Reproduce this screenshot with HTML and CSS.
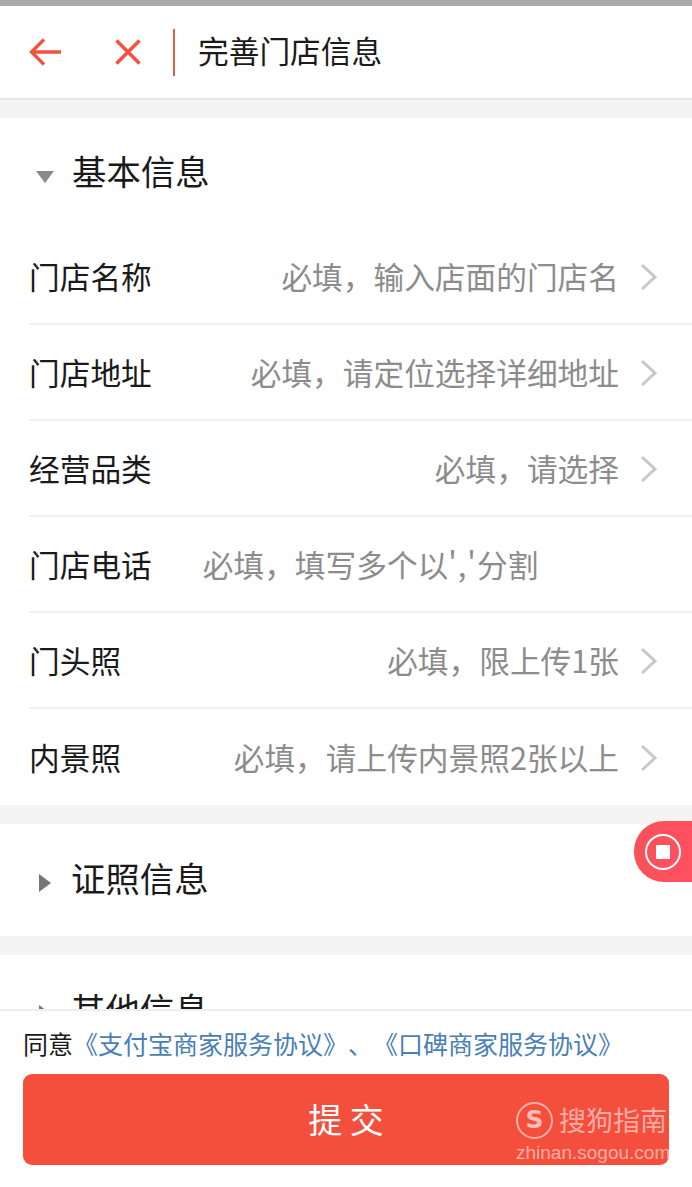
FILE: index.html
```html
<!DOCTYPE html>
<html lang="zh-CN">
<head>
    <meta charset="UTF-8">
    <title>完善门店信息</title>
    <link rel="stylesheet" href="styles.css">
</head>
<body>
    <div class="status"></div>
    <div class="header">
        <svg class="icon-back" width="34" height="32" viewBox="0 0 34 32">
            <path d="M32 16H3M15 3.500L2.500 16 15 28.500" fill="none" stroke="#f2533f" stroke-width="3.400"/>
        </svg>
        <svg class="icon-close" width="30" height="30" viewBox="0 0 30 30">
            <path d="M3.500 3.500L26.500 26.500M26.500 3.500L3.500 26.500" fill="none" stroke="#f2533f" stroke-width="3.600"/>
        </svg>
        <span class="header-line"></span>
        <span class="header-title">完善门店信息</span>
    </div>

    <div class="content">
        <div class="section section-first">
            <div class="section-title">
                <span class="arrow-down"></span>
                <span>基本信息</span>
            </div>
            <div class="row">
                <span class="row-label">门店名称</span>
                <span class="row-value">必填，输入店面的门店名</span>
                <svg class="chevron" width="20" height="30" viewBox="0 0 20 30"><path d="M3 3L16 15 3 27" fill="none" stroke="#c8c8c8" stroke-width="3"/></svg>
            </div>
            <div class="row">
                <span class="row-label">门店地址</span>
                <span class="row-value">必填，请定位选择详细地址</span>
                <svg class="chevron" width="20" height="30" viewBox="0 0 20 30"><path d="M3 3L16 15 3 27" fill="none" stroke="#c8c8c8" stroke-width="3"/></svg>
            </div>
            <div class="row">
                <span class="row-label">经营品类</span>
                <span class="row-value">必填，请选择</span>
                <svg class="chevron" width="20" height="30" viewBox="0 0 20 30"><path d="M3 3L16 15 3 27" fill="none" stroke="#c8c8c8" stroke-width="3"/></svg>
            </div>
            <div class="row">
                <span class="row-label">门店电话</span>
                <span class="row-input">必填，填写多个以<span class="row-quote">','</span>分割</span>
            </div>
            <div class="row">
                <span class="row-label">门头照</span>
                <span class="row-value">必填，限上传1张</span>
                <svg class="chevron" width="20" height="30" viewBox="0 0 20 30"><path d="M3 3L16 15 3 27" fill="none" stroke="#c8c8c8" stroke-width="3"/></svg>
            </div>
            <div class="row row-last">
                <span class="row-label">内景照</span>
                <span class="row-value">必填，请上传内景照2张以上</span>
                <svg class="chevron" width="20" height="30" viewBox="0 0 20 30"><path d="M3 3L16 15 3 27" fill="none" stroke="#c8c8c8" stroke-width="3"/></svg>
            </div>
        </div>

        <div class="section section-closed">
            <div class="section-title">
                <span class="arrow-right"></span>
                <span>证照信息</span>
            </div>
        </div>

        <div class="section section-closed">
            <div class="section-title">
                <span class="arrow-right"></span>
                <span>其他信息</span>
            </div>
        </div>
    </div>

    <div class="record">
        <span class="record-ring"><span class="record-stop"></span></span>
    </div>

    <div class="footer">
        <div class="agree">同意<a class="agree-link">《支付宝商家服务协议》、《口碑商家服务协议》</a></div>
        <div class="submit">提 交</div>
    </div>

    <div class="mark">
        <div class="mark-top">
            <span class="mark-logo">S</span>
            <span class="mark-name">搜狗指南</span>
        </div>
        <div class="mark-url">zhinan.sogou.com</div>
    </div>
</body>
</html>
```

FILE: styles.css
```css
*{
    margin: 0;
    padding: 0;
    box-sizing: border-box;
}
html,body{
    height: 1187px;
    overflow: hidden;
}
body{
    position: relative;
    background-color: #fff;
    color: #1a1a1a;
    font-family: "Noto Sans CJK SC", "Noto Sans", sans-serif;
    text-spacing-trim: space-all;
}
.status{
    height: 6px;
    background-color: #aaaaaa;
}

/* header */
.header{
    height: 94px;
    background-color: #fff;
    border-bottom: 2px solid #e6e6e6;
    display: flex;
    align-items: center;
}
.icon-back{
    margin-left: 29px;
}
.icon-close{
    margin-left: 50px;
}
.header-line{
    width: 2px;
    height: 47px;
    margin-left: 30px;
    background-color: #d9633f;
}
.header-title{
    margin-left: 23px;
    margin-bottom: 4px;
    font-size: 30.700px;
    line-height: 40px;
}

/* sections */
.content{
    height: 909px;
    overflow: hidden;
    background-color: #f4f4f4;
    padding-top: 18px;
}
.section{
    background-color: #fff;
    margin-bottom: 19px;
}
.section-closed{
    height: 112px;
}
.section-title{
    height: 111px;
    padding-bottom: 8px;
    display: flex;
    align-items: center;
    font-size: 34.400px;
}
.section-closed .section-title{
    padding-bottom: 6px;
}
.arrow-down{
    width: 0;
    height: 0;
    margin: 15px 18px 0 36px;
    border-left: 9px solid transparent;
    border-right: 9px solid transparent;
    border-top: 12px solid #8a8a8a;
}
.arrow-right{
    width: 0;
    height: 0;
    margin: 12px 20px 0 39px;
    border-top: 9px solid transparent;
    border-bottom: 9px solid transparent;
    border-left: 12px solid #777;
}

/* rows */
.row{
    height: 96px;
    margin-left: 29px;
    padding-right: 33px;
    padding-bottom: 2px;
    border-bottom: 2px solid #f0f0f0;
    display: flex;
    align-items: center;
    font-size: 30.700px;
}
.row-last{
    border-bottom: none;
}
.row-label{
    flex-shrink: 0;
}
.row-value{
    flex: 1;
    text-align: right;
    color: #8c8c8c;
    margin-right: 20px;
}
.row-input{
    margin-left: 51px;
    color: #8c8c8c;
}
.row-quote{
    letter-spacing: 1px;
}
.chevron{
    margin-top: 4px;
}

/* floating record button */
.record{
    position: absolute;
    top: 821px;
    right: 0;
    width: 58px;
    height: 61px;
    border-radius: 30px 0 0 30px;
    background: linear-gradient(to right, #f8525a, #ff5060);
    display: flex;
    align-items: center;
    padding-left: 11px;
}
.record-ring{
    width: 36px;
    height: 36px;
    border: 2px solid #fff;
    border-radius: 50%;
    display: flex;
    align-items: center;
    justify-content: center;
}
.record-stop{
    width: 14px;
    height: 14px;
    background-color: #fff;
}

/* footer */
.footer{
    height: 178px;
    border-top: 2px solid #eeeeee;
    padding: 0 23px;
}
.agree{
    height: 63px;
    font-size: 25px;
    line-height: 64px;
    white-space: nowrap;
}
.agree-link{
    color: #4a7fb5;
}
.submit{
    width: 646px;
    height: 91px;
    border-radius: 9px;
    background-color: #f44e3d;
    color: #fff;
    font-size: 34px;
    line-height: 90px;
    text-align: center;
}

/* watermark */
.mark{
    position: absolute;
    top: 1100px;
    left: 516px;
    width: 154px;
    color: rgba(255, 255, 255, .55);
}
.mark-top{
    display: flex;
    align-items: center;
    height: 40px;
}
.mark-logo{
    width: 37px;
    height: 37px;
    border: 2px solid rgba(255, 255, 255, .55);
    border-radius: 50%;
    font-family: "DejaVu Sans", sans-serif;
    font-weight: bold;
    font-size: 25px;
    line-height: 32px;
    text-align: center;
    color: rgba(255, 255, 255, .65);
}
.mark-name{
    margin-left: 6px;
    font-size: 27px;
    line-height: 40px;
    white-space: nowrap;
}
.mark-url{
    font-family: "Liberation Sans", sans-serif;
    font-size: 19px;
    line-height: 24px;
    margin-top: 1px;
    white-space: nowrap;
}
```
